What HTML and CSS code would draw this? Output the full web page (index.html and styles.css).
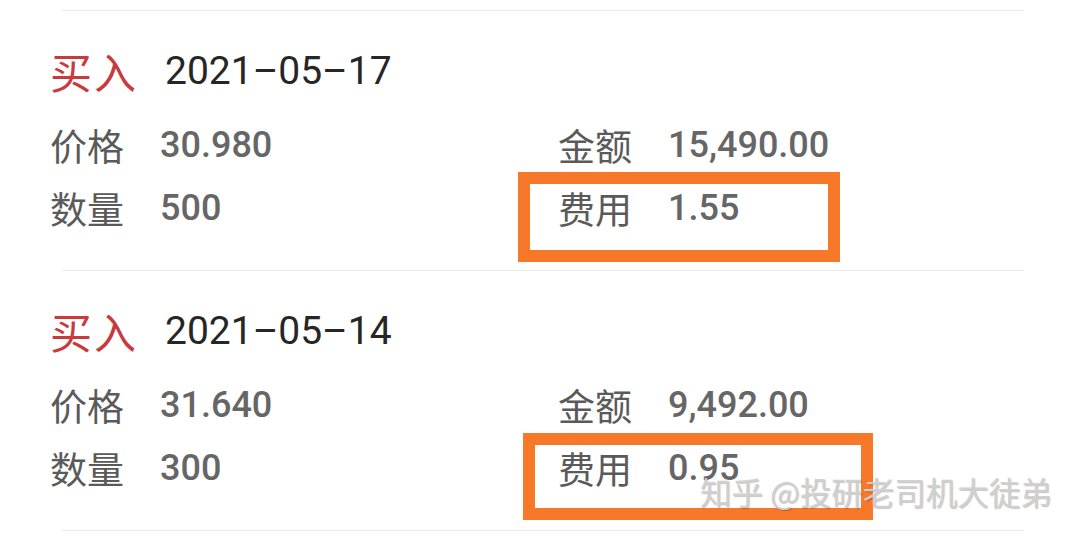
FILE: index.html
```html
<!DOCTYPE html>
<html lang="zh-CN">
<head>
<meta charset="utf-8">
<title>交易记录</title>
<link rel="stylesheet" href="styles.css">
</head>
<body>
<main class="list">
  <hr class="divider">
  <section class="trade">
    <div class="head"><span class="type">买入</span><span class="date">2021–05–17</span></div>
    <div class="fields">
      <div class="field"><span class="label">价格</span><span class="value">30.980</span></div>
      <div class="field"><span class="label">金额</span><span class="value">15,490.00</span></div>
      <div class="field"><span class="label">数量</span><span class="value">500</span></div>
      <div class="field"><span class="label">费用</span><span class="value">1.55</span></div>
    </div>
    <div class="mark mark-a"></div>
  </section>
  <hr class="divider">
  <section class="trade">
    <div class="head"><span class="type">买入</span><span class="date">2021–05–14</span></div>
    <div class="fields">
      <div class="field"><span class="label">价格</span><span class="value">31.640</span></div>
      <div class="field"><span class="label">金额</span><span class="value">9,492.00</span></div>
      <div class="field"><span class="label">数量</span><span class="value">300</span></div>
      <div class="field"><span class="label">费用</span><span class="value">0.95</span></div>
    </div>
    <div class="mark mark-b"></div>
  </section>
  <hr class="divider">
  <div class="watermark">知乎 @投研老司机大徒弟</div>
</main>
</body>
</html>
```
FILE: styles.css
```css
html, body {
  margin: 0;
  padding: 0;
  background: #ffffff;
}

body {
  width: 1080px;
  height: 536px;
  overflow: hidden;
  font-family: Roboto, "Noto Sans CJK SC", sans-serif;
}

.list {
  position: relative;
  padding-top: 10px;
}

.divider {
  margin: 0 56px 0 62px;
  border: 0;
  height: 1px;
  background: #ececec;
}

.trade {
  position: relative;
  padding: 38px 0 30px 50px;
  height: 191px;
}

.head {
  display: flex;
  align-items: center;
  height: 44px;
  gap: 27px;
}

.type {
  font-family: "Noto Sans CJK SC", sans-serif;
  font-size: 42px;
  line-height: 44px;
  color: #c83a3c;
  letter-spacing: 2px;
}

.date {
  font-family: Roboto, sans-serif;
  font-size: 39px;
  line-height: 44px;
  color: #262626;
}

.fields {
  margin-top: 20px;
  display: grid;
  grid-template-columns: 508px 1fr;
  grid-auto-rows: 63px;
}

.field {
  display: flex;
  align-items: center;
}

.label {
  width: 110px;
  font-family: "Noto Sans CJK SC", sans-serif;
  font-size: 37px;
  color: #5a5a5a;
}

.value {
  font-family: Roboto, sans-serif;
  font-size: 36px;
  font-weight: 500;
  color: #666666;
}

.mark {
  position: absolute;
  box-sizing: border-box;
  border: 12px solid #f8782a;
}

.mark-a {
  left: 518px;
  top: 161px;
  width: 322px;
  height: 90px;
}

.mark-b {
  left: 523px;
  top: 162px;
  width: 350px;
  height: 87px;
}

.watermark {
  position: absolute;
  left: 700px;
  top: 471px;
  font-family: "Noto Sans CJK SC", sans-serif;
  font-size: 31.5px;
  line-height: 40px;
  color: rgba(208, 208, 208, 0.95);
  text-shadow: 1px 1px 1px rgba(0, 0, 0, 0.22);
  white-space: nowrap;
}
```
